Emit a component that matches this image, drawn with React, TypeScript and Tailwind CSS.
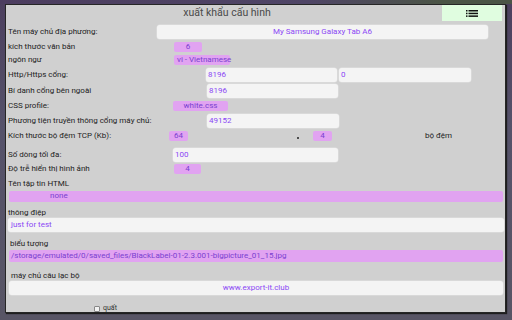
import type { ReactNode } from "react";

const font = { fontFamily: "Roboto, 'Noto Sans', sans-serif" };

function Row({
  label,
  labelW,
  className,
  children,
}: {
  label: string;
  labelW: string;
  className: string;
  children?: ReactNode;
}) {
  return (
    <div className={`flex items-center pl-[2px] ${className}`}>
      <span className={`${labelW} shrink-0 text-[8px] leading-none text-[#222] whitespace-nowrap`}>{label}</span>
      {children}
    </div>
  );
}

function Field({ className, children }: { className: string; children?: ReactNode }) {
  return (
    <div className={`h-[14px] flex items-center bg-[#f4f4f4] rounded-[3px] shadow-[0_0_0_0.5px_#e2e2e2] text-[8px] leading-none text-[#8b47f5] whitespace-nowrap ${className}`}>
      {children}
    </div>
  );
}

function Pill({ className, children }: { className: string; children?: ReactNode }) {
  return (
    <div className={`flex items-center bg-[#e1a3f1] rounded-[2px] text-[8px] leading-none text-[#7a3fd0] whitespace-nowrap ${className}`}>
      {children}
    </div>
  );
}

function ListIcon() {
  return (
    <svg width="12" height="7" viewBox="0 0 12 7" fill="#111">
      <rect x="0" y="0" width="1.5" height="1.5" />
      <rect x="0" y="2.7" width="1.5" height="1.5" />
      <rect x="0" y="5.4" width="1.5" height="1.5" />
      <rect x="2.5" y="0" width="9.5" height="1.5" />
      <rect x="2.5" y="2.7" width="9.5" height="1.5" />
      <rect x="2.5" y="5.4" width="9.5" height="1.5" />
    </svg>
  );
}

export default function App() {
  return (
    <div
      className="w-[512px] h-[320px] overflow-hidden bg-[linear-gradient(180deg,#4c3f5e_0%,#55526a_40%,#585565_100%)] flex flex-col"
      style={font}
    >
      <div className="h-[4px] shrink-0 bg-[linear-gradient(90deg,#4c3d5f_0%,#4f4566_60%,#4b5446_86%,#4b5446_100%)]" />
      <div className="ml-[5px] w-[501px] h-[309px] shrink-0 bg-[#d0d0d0] border border-[#262626] shadow-[1px_1px_1px_#1e1e1e] overflow-hidden flex flex-col">
        {/* header */}
        <div className="h-[16px] shrink-0 flex">
          <div className="flex-1 flex items-center justify-center text-[10.5px] leading-none text-[#4a4a4a] pl-[6px]">
            xuất khẩu cấu hình
          </div>
          <div className="w-[60px] mr-[3px] bg-[#e0fde0] flex items-center justify-center">
            <ListIcon />
          </div>
        </div>

        <Row label="Tên máy chủ địa phương:" labelW="w-[149px]" className="mt-[4px] h-[14px]">
          <Field className="w-[331px] justify-center">My Samsung Galaxy Tab A6</Field>
        </Row>
        <Row label="kích thước văn bản" labelW="w-[166px]" className="mt-[3px] h-[10px]">
          <Pill className="w-[28px] h-[10px] justify-center">6</Pill>
        </Row>
        <Row label="ngôn ngư" labelW="w-[166px]" className="mt-[3px] h-[10px]">
          <Pill className="w-[56px] h-[10px] pl-[3px]">vi - Vietnamese</Pill>
        </Row>
        <Row label="Http/Https cổng:" labelW="w-[198px]" className="mt-[3px] h-[14px]">
          <Field className="w-[131px] pl-[2px]">8196</Field>
          <Field className="w-[132px] ml-[2px] pl-[2px]">0</Field>
        </Row>
        <Row label="Bí danh cổng bên ngoài" labelW="w-[199px]" className="mt-[2px] h-[14px]">
          <Field className="w-[131px] pl-[2px]">8196</Field>
        </Row>
        <Row label="CSS profile:" labelW="w-[165px]" className="mt-[3px] h-[10px]">
          <Pill className="w-[55px] h-[10px] justify-center">white.css</Pill>
        </Row>
        <Row label="Phương tiện truyền thông cổng máy chủ:" labelW="w-[199px]" className="mt-[3px] h-[14px]">
          <Field className="w-[132px] pl-[2px]">49152</Field>
        </Row>
        <Row label="Kích thước bộ đệm TCP (Kb):" labelW="w-[161px]" className="mt-[3px] h-[10px]">
          <Pill className="w-[19px] h-[10px] justify-center">64</Pill>
          <span className="ml-[109px] mt-[3px] w-[2px] h-[2px] rounded-full bg-[#222]" />
          <Pill className="ml-[14px] w-[19px] h-[10px] justify-center">4</Pill>
          <span className="ml-[93px] text-[8px] leading-none text-[#222]">bộ đệm</span>
        </Row>
        <Row label="Số dòng tối đa:" labelW="w-[165px]" className="mt-[7px] h-[14px]">
          <Field className="w-[165px] pl-[2px]">100</Field>
        </Row>
        <Row label="Độ trễ hiển thị hình ảnh" labelW="w-[166px]" className="mt-[2px] h-[10px]">
          <Pill className="w-[27px] h-[10px] justify-center">4</Pill>
        </Row>

        <div className="mt-[5px] h-[10px] pl-[2px] flex items-center text-[8px] leading-none text-[#222]">Tên tập tin HTML</div>
        <Pill className="mt-[2px] ml-[3px] mr-[2px] h-[11px] pl-[41px]">none</Pill>

        <div className="mt-[6px] h-[10px] pl-[2px] flex items-center text-[8px] leading-none text-[#222]">thông điệp</div>
        <Field className="ml-[2px] mr-[1px] pl-[3px]">just for test</Field>

        <div className="mt-[8px] h-[10px] pl-[4px] flex items-center text-[8px] leading-none text-[#222]">biểu tượng</div>
        <Pill className="mt-[1px] ml-[3px] mr-[2px] h-[12px] pl-[2px] text-[#4f2a6e]">
          /storage/emulated/0/saved_files/BlackLabel-01-2.3.001-bigpicture_01_15.jpg
        </Pill>

        <div className="mt-[9px] h-[10px] pl-[5px] flex items-center text-[8px] leading-none text-[#222]">máy chủ câu lạc bộ</div>
        <Field className="ml-[3px] mr-[2px] justify-center">www.export-it.club</Field>

        <div className="mt-[10px] ml-[88px] flex items-center gap-[3px]">
          <span className="w-[6px] h-[6px] rounded-[1px] border border-[#888] bg-[#f2f2f2]" />
          <span className="text-[7px] leading-none text-[#333]">quất</span>
        </div>
      </div>
    </div>
  );
}
